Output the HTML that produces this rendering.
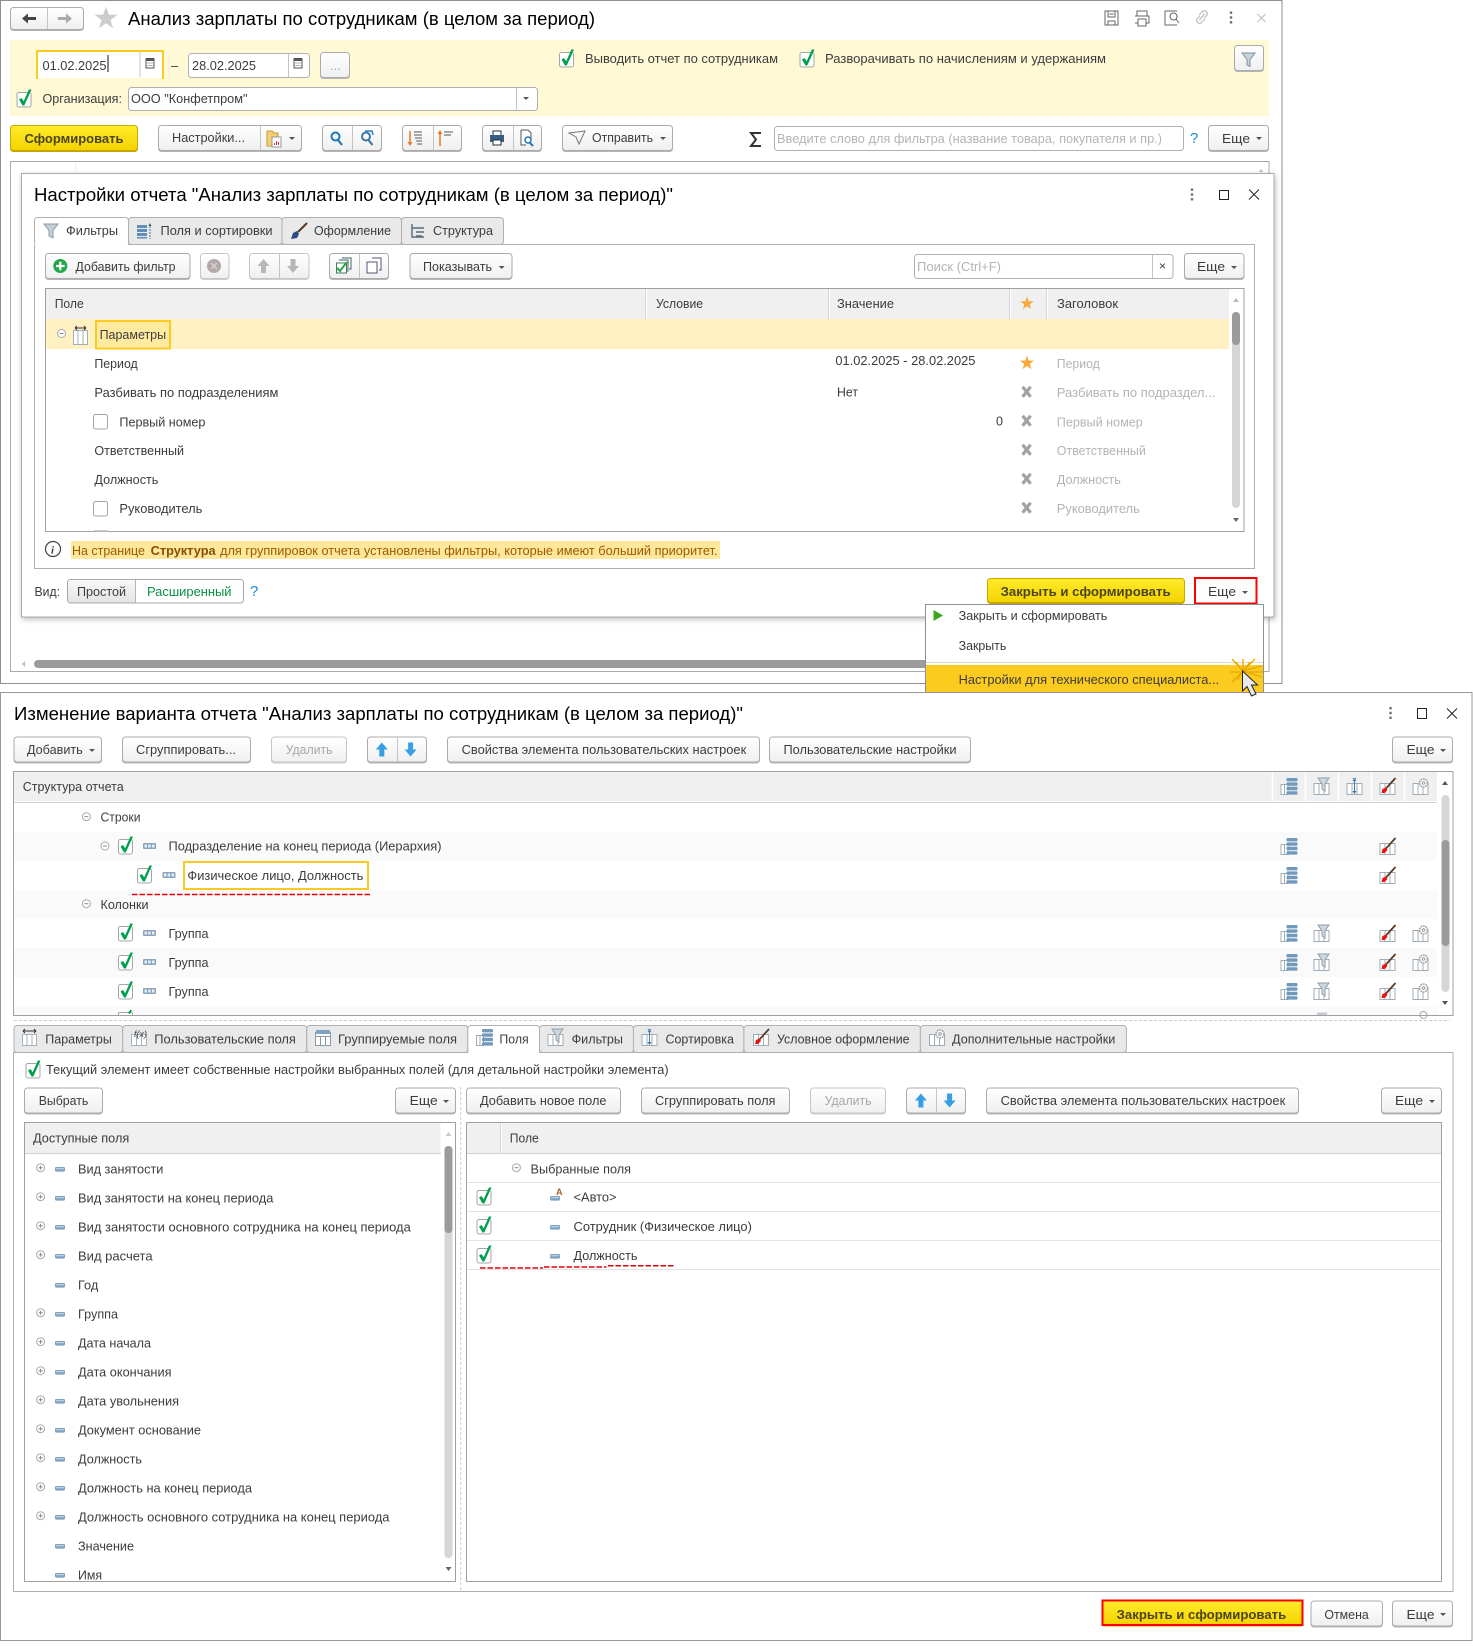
<!DOCTYPE html>
<html lang="ru"><head><meta charset="utf-8"><title>Анализ зарплаты</title>
<style>
html,body{margin:0;padding:0;background:#fff}
svg{display:block}
text{font-family:"Liberation Sans",Arial,sans-serif;font-size:13px;fill:#3c3c3c}
.t{font-size:18px;fill:#000}
.g{fill:#b4b4b4}
.d{fill:#a8a8a8}
.k{fill:#111}
.by{font-weight:bold;fill:#4a4520}
.o{fill:#9c5a00}
.ob{fill:#8a4f00;font-weight:bold}
.h{fill:#1e86cf;font-size:15px}
.gr{fill:#0a8f45}
.b{fill:url(#w);stroke:#ababab;filter:drop-shadow(0 1.2px 0 #b5b5b5)}
.dis{fill:url(#w);stroke:#c6c6c6;filter:drop-shadow(0 1.2px 0 #cfcfcf)}
.y{fill:url(#yl);stroke:#c9a900;filter:drop-shadow(0 1.2px 0 #c3a400)}
.i{fill:#fff;stroke:#b0b0b0}
.f{fill:none;stroke:#a5a5a5}
.l{stroke:#c4c4c4;fill:none}
.tab{fill:#e9e9e9;stroke:#b0b0b0}
.tabA{fill:#fff;stroke:#b0b0b0}
.hd{fill:#f0f0f0}
</style></head><body>
<svg xmlns="http://www.w3.org/2000/svg" width="1473" height="1646" viewBox="0 0 1473 1646">
<defs>
<linearGradient id="w" x1="0" y1="0" x2="0" y2="1"><stop offset="0" stop-color="#fff"/><stop offset="1" stop-color="#efefef"/></linearGradient>
<linearGradient id="yl" x1="0" y1="0" x2="0" y2="1"><stop offset="0" stop-color="#ffec2a"/><stop offset="1" stop-color="#f5d200"/></linearGradient>
<linearGradient id="pg" x1="0" y1="0" x2="0" y2="1"><stop offset="0" stop-color="#f8f8f8"/><stop offset="1" stop-color="#e4e4e4"/></linearGradient>
<g id="cb"><rect x=".5" y=".5" width="14" height="14.5" rx="2" fill="#fff" stroke="#a5a5a5"/><path d="M2.500 7.500 5 6 7.200 9.200 12.400-2.500H15L7.800 13.500H6z" fill="#00a14e"/></g>
<g id="ub"><rect x=".5" y=".5" width="14" height="14.5" rx="2" fill="#fff" stroke="#a5a5a5"/></g>
<path id="car" d="M-3 0H3L0 3z" fill="#555"/>
<path id="star" d="M0-10 2.35-3.24 9.51-3.09 3.8 1.24 5.88 8.09 0 4-5.88 8.09-3.8 1.24-9.51-3.09-2.35-3.24z"/>
<g id="cal"><rect x="-4" y="-4.5" width="8" height="9.5" fill="#fff" stroke="#555"/><rect x="-4" y="-5" width="8" height="3" fill="#555"/><path d="M-2.5 0h5M-2.5 2.5h5" stroke="#666" stroke-dasharray="1 1"/></g>
<g id="tg"><path d="M.5 6.5h7v10h-7zM4 6.5v10" fill="#fff" stroke="#a0acb5"/></g>
<g id="tb"><path d="M.5 5.5h15v11H.5zM5.5 5.5v11M10.5 5.5v11" fill="#fff" stroke="#a0acb5"/></g>
<g id="i1"><use href="#tg"/><g fill="#7199bb"><rect x="6" y="0" width="11" height="3.4" rx="1"/><rect x="6" y="4.4" width="11" height="3.4" rx="1"/><rect x="6" y="8.8" width="11" height="3.4" rx="1"/><rect x="6" y="13.2" width="11" height="3.4" rx="1"/></g></g>
<g id="i2"><use href="#tb"/><path d="M4.500 0H15.500L11.500 6V13L8.500 11V6z" fill="#cfd7dd" stroke="#8f9eaa"/></g>
<g id="i3"><use href="#tb"/><path d="M8 2V14" stroke="#3f7fb8"/><path d="M6 13h4L8 16z" fill="#2a74b8"/><path d="M6.500 0l3 3M9.500 0l-3 3" stroke="#3f7fb8"/></g>
<g id="i4"><use href="#tb"/><path d="M16 0 6 11" stroke="#5b3a22" stroke-width="1.8"/><path d="M2 15 3 11 6.5 9.5 8 12 5 15z" fill="#ee0f0f"/></g>
<g id="i5"><use href="#tb"/><circle cx="11" cy="5" r="4" fill="#fff" stroke="#a0a0a0" stroke-width="1.6" stroke-dasharray="1.8 .8"/><circle cx="11" cy="5" r="1.3" fill="none" stroke="#999"/></g>
<g id="grp"><rect width="13" height="6" rx="1" fill="#8aa5bd"/><path d="M1.5 1.5h2.5v3H1.5zM5.2 1.5h2.5v3H5.2zM9 1.5h2.5v3H9z" fill="#e7eef3"/></g>
<g id="fld"><rect width="10" height="4.6" rx="1.2" fill="#7da2c2"/><rect x="1" y="1" width="8" height="1.3" fill="#b8cfe0"/></g>
<g id="cm"><circle r="4" fill="#fff" stroke="#aaa"/><path d="M-2 0H2" stroke="#888"/></g>
<g id="cp"><circle r="4" fill="#fff" stroke="#aaa"/><path d="M-2 0H2M0-2V2" stroke="#888"/></g>
<path id="gx" d="M-4-5 4 5M4-5-4 5" stroke="#a2a2a2" stroke-width="3.2" fill="none"/>
<path id="up" d="M0-7 6 0H2.5V7H-2.500V0H-6z"/>
<path id="dn" d="M0 7 6 0H2.5V-7H-2.500V0H-6z"/>
<g id="dots" fill="#707070"><rect x="-1.200" y="-6" width="2.400" height="2.400"/><rect x="-1.200" y="-1.200" width="2.400" height="2.400"/><rect x="-1.200" y="3.600" width="2.400" height="2.400"/></g>
</defs>
<rect width="1473" height="1646" fill="#fff"/>

<!-- WINDOW 1 -->
<rect x=".5" y=".5" width="1281.500" height="683" fill="#fff" stroke="#8e8e8e"/>
<rect class="b" x="10.500" y="7.500" width="73" height="22" rx="3"/><path class="l" d="M47.500 8V29"/>
<path d="M22 18.500l6-5v3.500h8v3h-8v3.500z" fill="#444"/><path d="M72 18.500l-6-5v3.500h-8v3h8v3.500z" fill="#aaa"/>
<use href="#star" transform="translate(106 18.500) scale(1.200)" fill="#cdcdcd"/>
<text class="t" x="128" y="25" textLength="467" lengthAdjust="spacingAndGlyphs">Анализ зарплаты по сотрудникам (в целом за период)</text>
<g fill="none" stroke="#666">
<path d="M1105 11h13v14h-13zM1108 11v6h7v-6M1108 25v-4h7v4M1109.500 14h4"/>
<path d="M1137 16v-5h10v5M1135 16h14v7h-3M1138 23h-3M1138 19h8v7h-8z"/>
<path d="M1177 11h-12v14h12M1173.500 13a3.500 3.500 0 1 0 .1 0M1176 19l3 4"/>
</g>
<path d="M1199 15l4-4a3 3 0 0 1 4 4l-3 3M1205 19l-4 4a3 3 0 0 1-4-4l3-3M1199.500 20.500l5-7" fill="none" stroke="#bdbdbd" stroke-width="1.200"/>
<use href="#dots" transform="translate(1231 17.500)" fill="#999"/>
<path d="M1257.500 14l8 8M1265.500 14l-8 8" stroke="#bbb" fill="none"/>

<rect x="10" y="40" width="1259" height="76" fill="#fff9d6"/>
<rect x="37" y="51" width="126" height="27" fill="#fff"/>
<path d="M37 79V51H163V79" fill="none" stroke="#fbc91f" stroke-width="2"/>
<path class="l" d="M140 52V77"/><use href="#cal" x="150" y="63"/>
<text x="42.500" y="70" textLength="64" lengthAdjust="spacingAndGlyphs">01.02.2025</text><path d="M108 55V72" stroke="#111"/>
<text x="171" y="70">–</text>
<rect class="i" x="188.500" y="53.500" width="121" height="24" rx="3"/><path class="l" d="M288.500 54V77"/><use href="#cal" x="298" y="63"/>
<text x="192" y="70" textLength="64" lengthAdjust="spacingAndGlyphs">28.02.2025</text>
<rect class="b" x="320.500" y="52.500" width="29" height="25" rx="3"/><text x="330" y="70" class="d">...</text>
<use href="#cb" x="16.500" y="92"/>
<text x="42.500" y="103" textLength="79.500" lengthAdjust="spacingAndGlyphs">Организация:</text>
<rect class="i" x="128.500" y="87.500" width="409" height="23" rx="3"/><path class="l" d="M516.500 88V110"/><use href="#car" x="526" y="97"/>
<text x="131" y="103" textLength="116.500" lengthAdjust="spacingAndGlyphs">ООО "Конфетпром"</text>
<use href="#cb" x="559" y="52"/><text x="585" y="63" textLength="193" lengthAdjust="spacingAndGlyphs">Выводить отчет по сотрудникам</text>
<use href="#cb" x="799.500" y="52"/><text x="825" y="63" textLength="281" lengthAdjust="spacingAndGlyphs">Разворачивать по начислениям и удержаниям</text>
<rect class="b" x="1234.500" y="45.500" width="29" height="25" rx="3"/>
<path d="M1242 53h13l-5 6.500v7l-3-1.500v-5.500z" fill="#c8d2d9" stroke="#7f919e"/>

<rect class="y" x="10.500" y="125.500" width="127" height="25" rx="3"/>
<text class="by" x="24.500" y="143" textLength="99" lengthAdjust="spacingAndGlyphs">Сформировать</text>
<rect class="b" x="158.500" y="125.500" width="143" height="25" rx="3"/><path class="l" d="M260.500 126V150"/>
<text x="172" y="142" textLength="73" lengthAdjust="spacingAndGlyphs">Настройки...</text>
<path d="M267 131h5l2 2h4v13h-11z" fill="#f3cf75" stroke="#c59a3a"/><rect x="272" y="137" width="9" height="10" fill="#fff" stroke="#999"/><path d="M274.500 145v-2M276.500 145v-4M278.500 145v-3" stroke="#c33"/>
<use href="#car" x="292" y="137"/>
<rect class="b" x="322.500" y="125.500" width="59" height="25" rx="3"/><path class="l" d="M352.500 126V150"/>
<circle cx="335.500" cy="136.500" r="4" fill="none" stroke="#1d76b8" stroke-width="2"/><path d="M338 140l4 5" stroke="#1d76b8" stroke-width="2.200"/>
<circle cx="366" cy="136.500" r="4" fill="none" stroke="#3c78a8" stroke-width="2"/><path d="M368.500 140l4 5" stroke="#3c78a8" stroke-width="2.200"/><path d="M365 131l7 0 1 4" fill="none" stroke="#2c80c0" stroke-width="1.500"/>
<rect class="b" x="402.500" y="125.500" width="59" height="25" rx="3"/><path class="l" d="M433.500 126V150"/>
<path d="M410 131v13" stroke="#e87a2a" stroke-width="1.500"/><path d="M407.500 142h5L410 146z" fill="#e87a2a"/><path d="M414 132h8M414 135h8M415 138h7M416 141h6M417 144h5" stroke="#555"/>
<path d="M440 133v13" stroke="#e87a2a" stroke-width="1.500"/><path d="M437.500 134h5L440 130z" fill="#e87a2a"/><path d="M444 132h9M444 135h7" stroke="#555"/>
<rect class="b" x="482.500" y="125.500" width="59" height="25" rx="3"/><path class="l" d="M513.500 126V150"/>
<path d="M493 131h8v5h-8z" fill="#fff" stroke="#234"/><rect x="490" y="135" width="14" height="7" fill="#3a5e80"/><rect x="493" y="140" width="8" height="5" fill="#fff" stroke="#234"/>
<path d="M521 130h7l3 3v6M521 130v15h5" fill="#fff" stroke="#556"/><circle cx="528" cy="140" r="3" fill="#fff" stroke="#1d76b8" stroke-width="1.500"/><path d="M530 143l3 3" stroke="#1d76b8" stroke-width="2"/>
<rect class="b" x="562.500" y="125.500" width="110" height="25" rx="3"/>
<path d="M569 133l16-2-6 13-3-7z" fill="none" stroke="#777"/>
<text x="592" y="142" textLength="61" lengthAdjust="spacingAndGlyphs">Отправить</text><use href="#car" x="663" y="137"/>
<path d="M761 133h-10l5 6.500-5 6.500h10" fill="none" stroke="#333" stroke-width="2"/>
<rect class="i" x="774.500" y="126.500" width="409" height="24" rx="3"/>
<text class="g" x="777" y="143" textLength="385" lengthAdjust="spacingAndGlyphs">Введите слово для фильтра (название товара, покупателя и пр.)</text>
<text class="h" x="1190" y="143">?</text>
<rect class="b" x="1208.500" y="125.500" width="60" height="25" rx="3"/><text x="1222" y="143" textLength="28" lengthAdjust="spacingAndGlyphs">Еще</text><use href="#car" x="1259" y="137"/>

<rect x="10.500" y="161.500" width="1258.500" height="510" fill="#fff" stroke="#aaa"/>
<path d="M75.500 162V172" stroke="#eee"/><path d="M1259 172h4l-2-3z" fill="#bbb"/>
<rect x="34" y="660" width="900" height="8" rx="4" fill="#9c9c9c"/><path d="M25 661v6l-3-3z" fill="#bbb"/>

<!-- DIALOG 1 -->
<rect x="21.500" y="173.500" width="1252.500" height="443.500" fill="#fff" stroke="#a8a8a8" style="filter:drop-shadow(1px 2px 3px rgba(0,0,0,.25))"/>
<text class="t" x="34" y="201" textLength="639" lengthAdjust="spacingAndGlyphs">Настройки отчета "Анализ зарплаты по сотрудникам (в целом за период)"</text>
<use href="#dots" transform="translate(1192 194.500)"/>
<rect x="1219.500" y="190.500" width="9" height="9" fill="none" stroke="#222"/>
<path d="M1249 189.500l10 10M1259 189.500l-10 10" stroke="#222" fill="none"/>

<rect x="34.500" y="244.500" width="1220" height="324" fill="#fff" stroke="#b0b0b0"/>
<rect class="tab" x="128.500" y="217.500" width="153.500" height="27" rx="3"/>
<rect class="tab" x="282" y="217.500" width="119.500" height="27" rx="3"/>
<rect class="tab" x="401.500" y="217.500" width="102" height="27" rx="3"/>
<rect class="tabA" x="34.500" y="217.500" width="94" height="27" rx="3"/><rect x="35" y="243" width="93" height="3" fill="#fff"/>
<path d="M44 224h14l-5 6.500v7.500l-4-2v-5.500z" fill="#c3ced6" stroke="#8b9ca8"/>
<text x="66" y="235" textLength="52" lengthAdjust="spacingAndGlyphs">Фильтры</text>
<path d="M137 225h10v3h-10zM137 229h10v3h-10zM137 233h10v3h-10zM137 237h10v1.500h-10z" fill="#5f8fb8"/><path d="M150 226v13" stroke="#3a76a8" stroke-dasharray="2 1"/><path d="M148.500 226h3l-1.500-3z" fill="#555"/>
<text x="160.500" y="235" textLength="112" lengthAdjust="spacingAndGlyphs">Поля и сортировки</text>
<path d="M307 223l-9 9" stroke="#5b3a22" stroke-width="2"/><path d="M291 239l2-6 4-2 2 3-2 4z" fill="#2a4a88"/>
<text x="314" y="235" textLength="77" lengthAdjust="spacingAndGlyphs">Оформление</text>
<path d="M412 224v13h12M412 228h12M416 232h8M416 236h6" fill="none" stroke="#5a6a78" stroke-width="1.400"/>
<text x="433" y="235" textLength="60" lengthAdjust="spacingAndGlyphs">Структура</text>

<rect class="b" x="45.500" y="253.500" width="144.500" height="25" rx="3"/>
<circle cx="60.300" cy="266" r="7" fill="#22a84a"/><path d="M56 266h8.600M60.300 261.700v8.600" stroke="#fff" stroke-width="2.200"/>
<text x="75.500" y="271" textLength="100" lengthAdjust="spacingAndGlyphs">Добавить фильтр</text>
<rect class="dis" x="200.500" y="253.500" width="28.500" height="25" rx="3"/>
<circle cx="214" cy="266" r="7" fill="#b3a9a9"/><path d="M211 263l6 6M217 263l-6 6" stroke="#d8d2d2" stroke-width="1.500"/>
<rect class="dis" x="249.500" y="253.500" width="59.500" height="25" rx="3"/><path class="l" d="M279.500 254V278"/>
<use href="#up" transform="translate(263.500 266)" fill="#b7b7b7"/><use href="#dn" transform="translate(293 266)" fill="#b7b7b7"/>
<rect class="b" x="329.500" y="253.500" width="59" height="25" rx="3"/><path class="l" d="M359.500 254V278"/>
<path d="M342 258h9v11h-2M339 260h9v11h-2" fill="#fff" stroke="#466"/><rect x="336.500" y="263" width="10" height="10" fill="#fff" stroke="#476"/><path d="M337 268l3 3 7-9" fill="none" stroke="#2aa53f" stroke-width="2"/>
<path d="M372 258h9v12h-2" fill="#fff" stroke="#557"/><rect x="367" y="262" width="10" height="11" fill="#fff" stroke="#557"/>
<rect class="b" x="410" y="253.500" width="102" height="25" rx="3"/>
<text x="423" y="271" textLength="69" lengthAdjust="spacingAndGlyphs">Показывать</text><use href="#car" x="501.700" y="266"/>
<rect class="i" x="914.500" y="254.500" width="258.500" height="24" rx="3"/><path class="l" d="M1152.500 255V278"/>
<text class="g" x="917" y="271" textLength="84" lengthAdjust="spacingAndGlyphs">Поиск (Ctrl+F)</text><text x="1159" y="270" style="font-size:12px">×</text>
<rect class="b" x="1184.500" y="253.500" width="59.500" height="25" rx="3"/><text x="1197" y="271" textLength="28" lengthAdjust="spacingAndGlyphs">Еще</text><use href="#car" x="1234" y="266"/>

<rect x="45.500" y="288.500" width="1198.500" height="243" fill="#fff" stroke="#a0a0a0"/>
<rect x="46" y="289" width="1183" height="30" class="hd"/>
<path d="M646.500 289V319M829.500 289V319M1010.500 289V319M1047.500 289V319" stroke="#fff"/>
<path d="M645.500 289V319M828.500 289V319M1009.500 289V319M1046.500 289V319" stroke="#d5d5d5"/>
<rect x="46" y="319" width="1183" height="30" fill="#fff1c2"/>
<text x="54.700" y="308" textLength="29" lengthAdjust="spacingAndGlyphs">Поле</text>
<text x="656" y="308" textLength="47" lengthAdjust="spacingAndGlyphs">Условие</text>
<text x="837" y="308" textLength="57" lengthAdjust="spacingAndGlyphs">Значение</text>
<text x="1057" y="308" textLength="61" lengthAdjust="spacingAndGlyphs">Заголовок</text>
<use href="#star" transform="translate(1027 303.500) scale(.7)" fill="#f9a83a"/>
<use href="#cm" x="61.500" y="333.500"/>
<path d="M73.500 330.500h14v14h-14zM78 330.500v14M83 330.500v14" fill="#fff" stroke="#9fafba"/><path d="M75 328h11M75 328l2-2M75 328l2 2M86 328l-2-2M86 328l-2 2" stroke="#333" fill="none"/>
<rect x="96" y="321" width="74" height="27.500" fill="#ffeaa0" stroke="#fbc91f" stroke-width="2"/>
<text x="99.600" y="339" textLength="66.500" lengthAdjust="spacingAndGlyphs">Параметры</text>
<text x="94.400" y="368" textLength="43.400" lengthAdjust="spacingAndGlyphs">Период</text>
<text x="94.400" y="397" textLength="184" lengthAdjust="spacingAndGlyphs">Разбивать по подразделениям</text>
<use href="#ub" x="93" y="414"/><text x="119.400" y="426.500" textLength="86" lengthAdjust="spacingAndGlyphs">Первый номер</text>
<text x="94.400" y="455" textLength="89.600" lengthAdjust="spacingAndGlyphs">Ответственный</text>
<text x="94.400" y="484" textLength="64" lengthAdjust="spacingAndGlyphs">Должность</text>
<use href="#ub" x="93" y="501"/><text x="119.400" y="513" textLength="83" lengthAdjust="spacingAndGlyphs">Руководитель</text>
<rect x="93.500" y="530" width="14" height="1.500" fill="#ccc"/>
<text x="835.400" y="365" textLength="140" lengthAdjust="spacingAndGlyphs">01.02.2025 - 28.02.2025</text>
<text x="837" y="396.700" textLength="21" lengthAdjust="spacingAndGlyphs">Нет</text>
<text x="996" y="425.700" textLength="7" lengthAdjust="spacingAndGlyphs">0</text>
<use href="#star" transform="translate(1027 363) scale(.75)" fill="#f9a83a"/>
<use href="#gx" x="1026.600" y="391.700"/><use href="#gx" x="1026.600" y="420.700"/><use href="#gx" x="1026.600" y="449.700"/><use href="#gx" x="1026.600" y="478.700"/><use href="#gx" x="1026.600" y="507.700"/>
<text class="g" x="1056.800" y="368" textLength="43" lengthAdjust="spacingAndGlyphs">Период</text>
<text class="g" x="1056.800" y="397" textLength="158.600" lengthAdjust="spacingAndGlyphs">Разбивать по подраздел...</text>
<text class="g" x="1056.800" y="426.500" textLength="86" lengthAdjust="spacingAndGlyphs">Первый номер</text>
<text class="g" x="1056.800" y="455" textLength="89" lengthAdjust="spacingAndGlyphs">Ответственный</text>
<text class="g" x="1056.800" y="484" textLength="64" lengthAdjust="spacingAndGlyphs">Должность</text>
<text class="g" x="1056.800" y="513" textLength="83" lengthAdjust="spacingAndGlyphs">Руководитель</text>
<rect x="1232" y="312" width="8" height="196" rx="4" fill="#d6d6d6"/><rect x="1232" y="312" width="8" height="33" rx="4" fill="#9b9b9b"/>
<path d="M1233 302h6l-3-4z" fill="#bbb"/><path d="M1233 518h6l-3 4z" fill="#666"/>

<circle cx="53" cy="549" r="7.500" fill="#fff" stroke="#444" stroke-width="1.200"/><text x="51" y="553.500" style="font-size:11px;font-weight:bold;font-style:italic;font-family:'Liberation Serif',serif" fill="#333">i</text>
<rect x="71" y="541" width="649" height="18" fill="#ffe79c"/>
<text class="o" x="72" y="555" textLength="73" lengthAdjust="spacingAndGlyphs">На странице</text>
<text class="ob" x="150.600" y="555" textLength="65" lengthAdjust="spacingAndGlyphs">Структура</text>
<text class="o" x="220" y="555" textLength="497.500" lengthAdjust="spacingAndGlyphs">для группировок отчета установлены фильтры, которые имеют больший приоритет.</text>

<text x="34.500" y="596" textLength="25.500" lengthAdjust="spacingAndGlyphs">Вид:</text>
<rect x="67.500" y="579.500" width="176" height="23.500" rx="3" fill="#fff" stroke="#a8a8a8"/>
<path d="M70.500 580H135.500V602.500H70.500Q68 602.500 68 600V582.500Q68 580 70.500 580z" fill="url(#pg)"/>
<path d="M135.500 580V603" stroke="#b5b5b5"/>
<text x="77" y="596" textLength="49" lengthAdjust="spacingAndGlyphs">Простой</text>
<text class="gr" x="147" y="596" textLength="84.500" lengthAdjust="spacingAndGlyphs">Расширенный</text>
<text class="h" x="250" y="596">?</text>
<rect class="y" x="987.500" y="578.500" width="197" height="24" rx="3"/>
<text class="by" x="1000.600" y="596" textLength="170" lengthAdjust="spacingAndGlyphs">Закрыть и сформировать</text>
<rect x="1195" y="578" width="61.500" height="25.500" fill="#fdfdfd" stroke="#f00" stroke-width="2"/>
<text x="1208" y="596" textLength="28" lengthAdjust="spacingAndGlyphs">Еще</text><use href="#car" x="1245" y="591"/>

<!-- WINDOW 2 -->
<rect x=".5" y="692.500" width="1471.500" height="948" fill="#fff" stroke="#999"/>
<text class="t" x="14" y="720" textLength="729" lengthAdjust="spacingAndGlyphs">Изменение варианта отчета "Анализ зарплаты по сотрудникам (в целом за период)"</text>
<use href="#dots" transform="translate(1390.500 713)"/>
<rect x="1417.500" y="708.500" width="9" height="10" fill="none" stroke="#222"/>
<path d="M1447 708.500l10 10M1457 708.500l-10 10" stroke="#222" fill="none"/>
<rect class="b" x="14" y="737" width="87.500" height="25" rx="3"/><text x="27" y="754" textLength="55.700" lengthAdjust="spacingAndGlyphs">Добавить</text><use href="#car" x="92" y="749"/>
<rect class="b" x="122.500" y="737" width="128" height="25" rx="3"/><text x="136" y="754" textLength="100" lengthAdjust="spacingAndGlyphs">Сгруппировать...</text>
<rect class="dis" x="271.500" y="737" width="75" height="25" rx="3"/><text class="d" x="285.600" y="754" textLength="47" lengthAdjust="spacingAndGlyphs">Удалить</text>
<rect class="b" x="367.500" y="737" width="59" height="25" rx="3"/><path class="l" d="M397.500 737V762"/>
<use href="#up" transform="translate(381.800 749.500)" fill="#37a0e4"/><use href="#dn" transform="translate(410.600 749.500)" fill="#37a0e4"/>
<rect class="b" x="447.500" y="737" width="312" height="25" rx="3"/><text x="461.600" y="754" textLength="284.600" lengthAdjust="spacingAndGlyphs">Свойства элемента пользовательских настроек</text>
<rect class="b" x="769.500" y="737" width="201" height="25" rx="3"/><text x="783.500" y="754" textLength="173" lengthAdjust="spacingAndGlyphs">Пользовательские настройки</text>
<rect class="b" x="1392.500" y="737" width="60" height="25" rx="3"/><text x="1406.500" y="754" textLength="28" lengthAdjust="spacingAndGlyphs">Еще</text><use href="#car" x="1443" y="749"/>

<rect x="13.500" y="771.500" width="1439.500" height="244" fill="#fff" stroke="#a0a0a0"/>
<rect x="14" y="772" width="1423" height="29" class="hd"/><path d="M14 802.500H1437" stroke="#d2d2d2"/>
<path d="M1272.500 772V801M1305.500 772V801M1338.500 772V801M1371.500 772V801M1404.500 772V801" stroke="#fff" stroke-width="1.500"/>
<text x="22.700" y="791" textLength="101" lengthAdjust="spacingAndGlyphs">Структура отчета</text>
<use href="#i1" x="1280.500" y="778"/><use href="#i2" x="1313.500" y="778"/><use href="#i3" x="1346.500" y="778"/><use href="#i4" x="1379.500" y="778"/><use href="#i5" x="1412.500" y="778"/>
<g fill="#fafafa"><rect x="14" y="832" width="1423" height="29"/><rect x="14" y="890" width="1423" height="29"/><rect x="14" y="948" width="1423" height="29"/><rect x="14" y="1006" width="1423" height="9"/></g>
<use href="#cm" x="86.400" y="816.700"/><text x="100.500" y="821.700" textLength="40" lengthAdjust="spacingAndGlyphs">Строки</text>
<use href="#cm" x="105" y="846"/><use href="#cb" x="118" y="839"/><use href="#grp" x="143" y="843"/>
<text x="168.500" y="850.700" textLength="273" lengthAdjust="spacingAndGlyphs">Подразделение на конец периода (Иерархия)</text>
<use href="#cb" x="137" y="868"/><use href="#grp" x="162.500" y="872"/>
<rect x="184" y="862" width="184" height="27" fill="#fff" stroke="#fbc91f" stroke-width="2"/>
<text x="187.400" y="880" textLength="176" lengthAdjust="spacingAndGlyphs">Физическое лицо, Должность</text>
<path d="M132 894.500H370" stroke="#e8000b" stroke-width="1.500" stroke-dasharray="5.500 2"/>
<use href="#cm" x="86.400" y="903.700"/><text x="100.500" y="909" textLength="48" lengthAdjust="spacingAndGlyphs">Колонки</text>
<use href="#cb" x="118" y="926"/><use href="#grp" x="143" y="930"/><text x="168.500" y="938" textLength="40" lengthAdjust="spacingAndGlyphs">Группа</text>
<use href="#cb" x="118" y="955"/><use href="#grp" x="143" y="959"/><text x="168.500" y="967" textLength="40" lengthAdjust="spacingAndGlyphs">Группа</text>
<use href="#cb" x="118" y="984"/><use href="#grp" x="143" y="988"/><text x="168.500" y="996" textLength="40" lengthAdjust="spacingAndGlyphs">Группа</text>
<path d="M118.500 1015v-1.500q0-1 1-1h12q1 0 1 1v1.500" fill="#fff" stroke="#a5a5a5"/><path d="M128 1013l2-3h2l-2 4z" fill="#00a14e"/>
<use href="#i1" x="1280.500" y="838"/><use href="#i4" x="1379.500" y="838"/>
<use href="#i1" x="1280.500" y="867"/><use href="#i4" x="1379.500" y="867"/>
<use href="#i1" x="1280.500" y="925"/><use href="#i2" x="1313.500" y="925"/><use href="#i4" x="1379.500" y="925"/><use href="#i5" x="1412.500" y="925"/>
<use href="#i1" x="1280.500" y="954"/><use href="#i2" x="1313.500" y="954"/><use href="#i4" x="1379.500" y="954"/><use href="#i5" x="1412.500" y="954"/>
<use href="#i1" x="1280.500" y="983"/><use href="#i2" x="1313.500" y="983"/><use href="#i4" x="1379.500" y="983"/><use href="#i5" x="1412.500" y="983"/>
<path d="M1316.500 1012.500h11l-1 2.500h-9z" fill="#c1cad1"/><circle cx="1423.500" cy="1015" r="3.500" fill="none" stroke="#aaa"/>
<rect x="14" y="1015" width="1439" height="1" fill="#a0a0a0"/>
<rect x="1441.500" y="795" width="8" height="197" rx="4" fill="#d6d6d6"/><rect x="1441.500" y="840" width="8" height="106" rx="4" fill="#9b9b9b"/>
<path d="M1442 785h6l-3-4z" fill="#555"/><path d="M1442 1001h6l-3 4z" fill="#555"/>
<path d="M14 1020.500H1450" stroke="#ccc" stroke-dasharray="3 2"/>

<rect x="13.500" y="1052.500" width="1439.500" height="539" fill="#fff" stroke="#b0b0b0"/>
<rect class="tab" x="14" y="1025.500" width="108.700" height="27" rx="3"/>
<rect class="tab" x="122.700" y="1025.500" width="184" height="27" rx="3"/>
<rect class="tab" x="306.800" y="1025.500" width="161" height="27" rx="3"/>
<rect class="tab" x="539.500" y="1025.500" width="94" height="27" rx="3"/>
<rect class="tab" x="633.400" y="1025.500" width="110.500" height="27" rx="3"/>
<rect class="tab" x="743.900" y="1025.500" width="176.500" height="27" rx="3"/>
<rect class="tab" x="920.400" y="1025.500" width="206" height="27" rx="3"/>
<rect class="tabA" x="467.800" y="1025.500" width="71.700" height="27" rx="3"/><rect x="468.300" y="1051" width="70.700" height="3" fill="#fff"/>
<g transform="translate(22 1029)"><path d="M.5 5.500h14v11H.5zM5 5.500v11M10 5.500v11" fill="#fff" stroke="#a6b2bb"/><path d="M1 2h13M1 2l2-2M1 2l2 2M14 2l-2-2M14 2l-2 2" stroke="#333" fill="none"/></g>
<text x="45.300" y="1043.300" textLength="66.500" lengthAdjust="spacingAndGlyphs">Параметры</text>
<g transform="translate(131 1029)"><path d="M.5 5.500h15v11H.5zM5.500 5.500v11M10.500 5.500v11" fill="#fff" stroke="#a6b2bb"/><text x="3" y="8" style="font-size:9px;font-style:italic" fill="#345">f(x)</text></g>
<text x="154.300" y="1043.300" textLength="141.600" lengthAdjust="spacingAndGlyphs">Пользовательские поля</text>
<g transform="translate(315 1028)"><path d="M.5 4.500h15v13H.5zM.5 8.500h15M5.500 8.500v9M10.500 8.500v9" fill="#fff" stroke="#8a9aa6"/><rect x="1" y="2" width="14" height="4" rx="1" fill="#7da2c2"/></g>
<text x="338" y="1043.300" textLength="119" lengthAdjust="spacingAndGlyphs">Группируемые поля</text>
<use href="#i1" x="476" y="1029"/><text x="499.400" y="1043.300" textLength="29.300" lengthAdjust="spacingAndGlyphs">Поля</text>
<use href="#i2" x="547.500" y="1029"/><text x="571.600" y="1043.300" textLength="51.400" lengthAdjust="spacingAndGlyphs">Фильтры</text>
<use href="#i3" x="641.500" y="1029"/><text x="665.500" y="1043.300" textLength="68.400" lengthAdjust="spacingAndGlyphs">Сортировка</text>
<use href="#i4" x="753" y="1029"/><text x="777" y="1043.300" textLength="132.600" lengthAdjust="spacingAndGlyphs">Условное оформление</text>
<use href="#i5" x="929" y="1029"/><text x="952" y="1043.300" textLength="163.300" lengthAdjust="spacingAndGlyphs">Дополнительные настройки</text>

<use href="#cb" x="25.500" y="1063"/>
<text x="46" y="1074" textLength="622.600" lengthAdjust="spacingAndGlyphs">Текущий элемент имеет собственные настройки выбранных полей (для детальной настройки элемента)</text>
<rect class="b" x="24.500" y="1088" width="78" height="25" rx="3"/><text x="38.700" y="1105" textLength="49.600" lengthAdjust="spacingAndGlyphs">Выбрать</text>
<rect class="b" x="395.500" y="1088" width="60" height="25" rx="3"/><text x="409.700" y="1105" textLength="28" lengthAdjust="spacingAndGlyphs">Еще</text><use href="#car" x="446" y="1100"/>
<path d="M460.700 1087V1591" stroke="#ccc" stroke-dasharray="3 2"/>
<rect class="b" x="466.500" y="1088" width="154" height="25" rx="3"/><text x="480" y="1105" textLength="126.500" lengthAdjust="spacingAndGlyphs">Добавить новое поле</text>
<rect class="b" x="641.500" y="1088" width="148" height="25" rx="3"/><text x="655" y="1105" textLength="120.500" lengthAdjust="spacingAndGlyphs">Сгруппировать поля</text>
<rect class="dis" x="810.500" y="1088" width="75" height="25" rx="3"/><text class="d" x="824.600" y="1105" textLength="47" lengthAdjust="spacingAndGlyphs">Удалить</text>
<rect class="b" x="906.500" y="1088" width="59" height="25" rx="3"/><path class="l" d="M936.500 1088V1113"/>
<use href="#up" transform="translate(920.900 1100.500)" fill="#37a0e4"/><use href="#dn" transform="translate(949.600 1100.500)" fill="#37a0e4"/>
<rect class="b" x="986.500" y="1088" width="312" height="25" rx="3"/><text x="1000.600" y="1105" textLength="284.600" lengthAdjust="spacingAndGlyphs">Свойства элемента пользовательских настроек</text>
<rect class="b" x="1381.500" y="1088" width="60" height="25" rx="3"/><text x="1395" y="1105" textLength="28" lengthAdjust="spacingAndGlyphs">Еще</text><use href="#car" x="1432" y="1100"/>

<!-- left table -->
<rect x="24.500" y="1122.500" width="431" height="459" fill="#fff" stroke="#a0a0a0"/>
<rect x="25" y="1123" width="415.500" height="30" class="hd"/><path d="M25 1153.500H441" stroke="#d2d2d2"/>
<text x="33" y="1142.300" textLength="96.300" lengthAdjust="spacingAndGlyphs">Доступные поля</text>
<rect x="444.500" y="1146" width="8" height="412" rx="4" fill="#d6d6d6"/><rect x="444.500" y="1146" width="8" height="87" rx="4" fill="#9b9b9b"/>
<path d="M445.500 1136h6l-3-4z" fill="#ccc"/><path d="M445.500 1567h6l-3 4z" fill="#666"/>
<use href="#cp" x="40.600" y="1167.700"/><use href="#fld" x="55" y="1167"/><text x="78" y="1173.300" textLength="85.400" lengthAdjust="spacingAndGlyphs">Вид занятости</text>
<use href="#cp" x="40.600" y="1196.700"/><use href="#fld" x="55" y="1196"/><text x="78" y="1202.300" textLength="195.400" lengthAdjust="spacingAndGlyphs">Вид занятости на конец периода</text>
<use href="#cp" x="40.600" y="1225.700"/><use href="#fld" x="55" y="1225"/><text x="78" y="1231.300" textLength="332.800" lengthAdjust="spacingAndGlyphs">Вид занятости основного сотрудника на конец периода</text>
<use href="#cp" x="40.600" y="1254.700"/><use href="#fld" x="55" y="1254"/><text x="78" y="1260.300" textLength="74.600" lengthAdjust="spacingAndGlyphs">Вид расчета</text>
<use href="#fld" x="55" y="1283"/><text x="78" y="1289.300" textLength="20.300" lengthAdjust="spacingAndGlyphs">Год</text>
<use href="#cp" x="40.600" y="1312.700"/><use href="#fld" x="55" y="1312"/><text x="78" y="1318.300" textLength="40" lengthAdjust="spacingAndGlyphs">Группа</text>
<use href="#cp" x="40.600" y="1341.700"/><use href="#fld" x="55" y="1341"/><text x="78" y="1347.300" textLength="73" lengthAdjust="spacingAndGlyphs">Дата начала</text>
<use href="#cp" x="40.600" y="1370.700"/><use href="#fld" x="55" y="1370"/><text x="78" y="1376.300" textLength="93.500" lengthAdjust="spacingAndGlyphs">Дата окончания</text>
<use href="#cp" x="40.600" y="1399.700"/><use href="#fld" x="55" y="1399"/><text x="78" y="1405.300" textLength="101" lengthAdjust="spacingAndGlyphs">Дата увольнения</text>
<use href="#cp" x="40.600" y="1428.700"/><use href="#fld" x="55" y="1428"/><text x="78" y="1434.300" textLength="123" lengthAdjust="spacingAndGlyphs">Документ основание</text>
<use href="#cp" x="40.600" y="1457.700"/><use href="#fld" x="55" y="1457"/><text x="78" y="1463.300" textLength="64" lengthAdjust="spacingAndGlyphs">Должность</text>
<use href="#cp" x="40.600" y="1486.700"/><use href="#fld" x="55" y="1486"/><text x="78" y="1492.300" textLength="174" lengthAdjust="spacingAndGlyphs">Должность на конец периода</text>
<use href="#cp" x="40.600" y="1515.700"/><use href="#fld" x="55" y="1515"/><text x="78" y="1521.300" textLength="311.500" lengthAdjust="spacingAndGlyphs">Должность основного сотрудника на конец периода</text>
<use href="#fld" x="55" y="1544"/><text x="78" y="1550.300" textLength="56" lengthAdjust="spacingAndGlyphs">Значение</text>
<use href="#fld" x="55" y="1573"/><text x="78" y="1579.300" textLength="24" lengthAdjust="spacingAndGlyphs">Имя</text>

<!-- right table -->
<rect x="466.500" y="1122.500" width="975" height="459" fill="#fff" stroke="#a0a0a0"/>
<rect x="467" y="1123" width="974" height="30" class="hd"/>
<path d="M500.500 1123V1153" stroke="#d5d5d5"/><path d="M501.500 1123V1153" stroke="#fff"/>
<path d="M467 1153.500H1441" stroke="#d2d2d2"/><path d="M467 1182.500H1441M467 1211.500H1441M467 1240.500H1441M467 1269.500H1441" stroke="#e4e4e4"/>
<text x="509.800" y="1142.300" textLength="29" lengthAdjust="spacingAndGlyphs">Поле</text>
<use href="#cm" x="516.400" y="1167.700"/><text x="530.500" y="1173.300" textLength="100.500" lengthAdjust="spacingAndGlyphs">Выбранные поля</text>
<use href="#cb" x="476.500" y="1190"/><use href="#cb" x="476.500" y="1219"/><use href="#cb" x="476.500" y="1248"/>
<use href="#fld" x="550" y="1196"/><text x="556" y="1195" style="font-size:9px;font-weight:bold;fill:#a0622a">А</text>
<text x="573.500" y="1201.700" textLength="43" lengthAdjust="spacingAndGlyphs">&lt;Авто&gt;</text>
<use href="#fld" x="550" y="1225"/><text x="573.500" y="1231" textLength="178.400" lengthAdjust="spacingAndGlyphs">Сотрудник (Физическое лицо)</text>
<use href="#fld" x="550" y="1254"/><text x="573.500" y="1260" textLength="64" lengthAdjust="spacingAndGlyphs">Должность</text>
<g stroke="#e8000b" stroke-width="1.500" stroke-dasharray="5.500 2"><path d="M480 1268H543"/><path d="M544 1267H606.500"/><path d="M608 1265.700H673.500"/></g>

<!-- bottom buttons -->
<rect class="y" x="1102.500" y="1601" width="200" height="24" rx="2" style="stroke:#c3a400"/>
<rect x="1102.500" y="1600.500" width="200" height="24.500" fill="none" stroke="#f00" stroke-width="2"/>
<text class="by" x="1116.700" y="1619" textLength="169.500" lengthAdjust="spacingAndGlyphs">Закрыть и сформировать</text>
<rect class="b" x="1311" y="1601" width="71.500" height="25" rx="3"/><text x="1324.400" y="1619" textLength="44.400" lengthAdjust="spacingAndGlyphs">Отмена</text>
<rect class="b" x="1392.500" y="1601" width="60" height="25" rx="3"/><text x="1406.500" y="1619" textLength="28" lengthAdjust="spacingAndGlyphs">Еще</text><use href="#car" x="1443" y="1613"/>

<!-- POPUP -->
<rect x="925.500" y="604.500" width="338" height="87.500" fill="#fff" stroke="#8f8f8f"/>
<path d="M933.500 610L943 615.500 933.500 621z" fill="#3aa81a"/>
<text x="958.600" y="620" textLength="148.700" lengthAdjust="spacingAndGlyphs">Закрыть и сформировать</text>
<text x="958.600" y="650" textLength="47.700" lengthAdjust="spacingAndGlyphs">Закрыть</text>
<path d="M926 662.500H1263" stroke="#ddd8c0"/>
<rect x="926" y="665" width="337" height="27" fill="#fbcb1f"/>
<text x="958.600" y="684" textLength="260.500" lengthAdjust="spacingAndGlyphs">Настройки для технического специалиста...</text>
<g stroke="#e8a800" stroke-width="1.300" fill="none"><path d="M1232 659L1243 671M1243 659V682M1255 659L1243 671M1230 672H1263M1232 682L1243 671M1236 662L1249 680M1250 662L1237 680M1243 671L1262 666M1243 671L1262 677"/></g>
<path d="M1242.500 671V691L1247 686.500L1251.500 696L1256 694L1251.500 685H1257.500z" fill="#eaeaea" stroke="#222"/>
</svg>
</body></html>
